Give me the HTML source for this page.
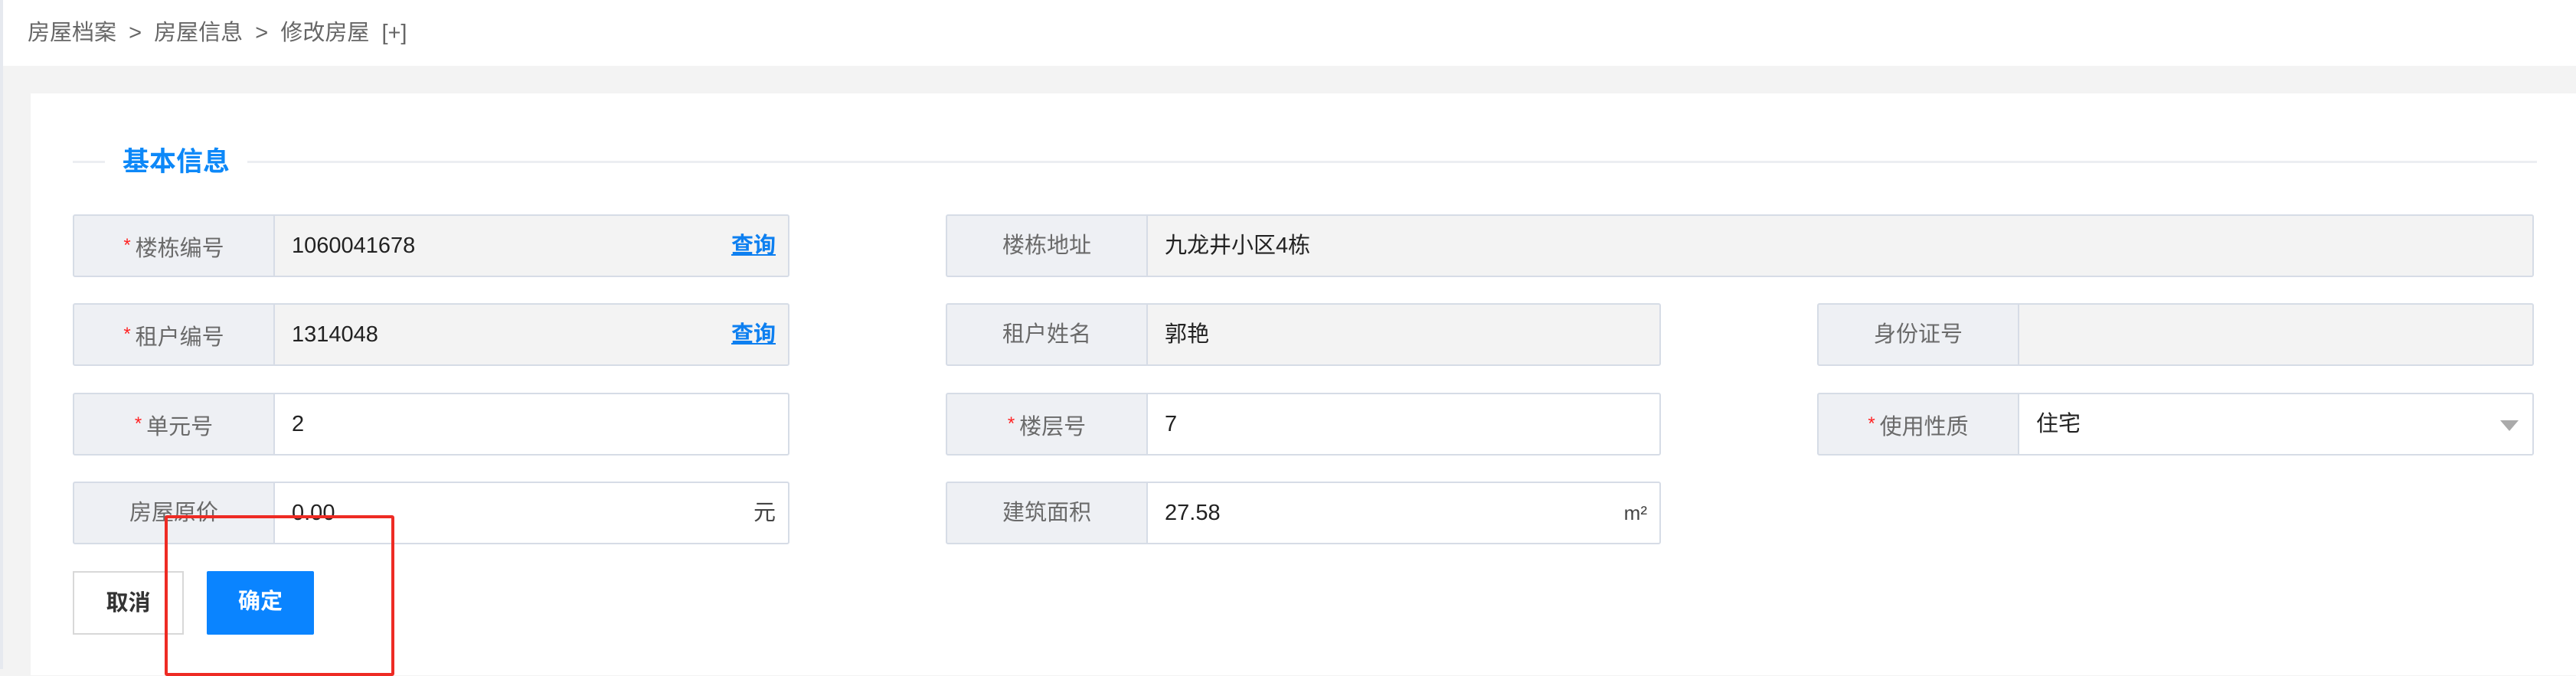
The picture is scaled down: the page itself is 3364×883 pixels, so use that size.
<!DOCTYPE html>
<html><head><meta charset="utf-8"><style>
*{margin:0;padding:0;box-sizing:border-box}
body{width:3364px;height:874px;overflow:hidden;background:#f3f3f3;font-family:"Liberation Sans","Noto Sans CJK SC",sans-serif;position:relative}
.hdr{position:absolute;left:0;top:0;width:3364px;height:86px;background:#fff}
.strip{position:absolute;left:0;top:0;width:4px;height:874px;background:#e6e9ef}
.bc{position:absolute;left:36px;top:24px;font-size:29px;color:#666;white-space:pre;line-height:38px}
.card{position:absolute;left:40px;top:122px;width:3324px;height:760px;background:#fff}
.line{position:absolute;height:3px;background:#eceef2;top:210px}
.title{position:absolute;left:160px;top:191px;font-size:35px;font-weight:bold;color:#0d88f8;line-height:42px}
.row{position:absolute;height:82px}
.lab{position:absolute;left:0;top:0;height:82px;width:264px;background:#eef0f4;border:2px solid #d6dce6;border-radius:3px 0 0 3px;color:#6a6a6a;font-size:29px;text-align:center;line-height:78px}
.lab i{color:#f22;font-style:normal;font-size:24px;vertical-align:6px;margin-right:6px}
.inp{position:absolute;left:262px;top:0;height:82px;border:2px solid #d6dce6;border-radius:0 3px 3px 0;background:#fff;font-size:29px;color:#222;line-height:78px;padding-left:22px}
.ro{background:#f3f3f3}
.q{position:absolute;right:16px;top:0;color:#0d7ff0;font-weight:bold;text-decoration:underline}
.suf{position:absolute;right:16px;top:0;color:#444}
.btn{position:absolute;top:746px;height:83px;font-size:29px;font-weight:bold;text-align:center;line-height:81px}
</style></head><body>
<div class="hdr"></div>
<div class="strip"></div>
<div class="bc">房屋档案  &gt;  房屋信息  &gt;  修改房屋  [+]</div>
<div class="card"></div>
<div class="line" style="left:95px;width:42px"></div>
<div class="line" style="left:323px;width:2990px"></div>
<div class="title">基本信息</div>

<div class="row" style="left:95px;top:280px"><div class="lab"><i>*</i>楼栋编号</div><div class="inp ro" style="width:674px">1060041678<span class="q">查询</span></div></div>
<div class="row" style="left:95px;top:396px"><div class="lab"><i>*</i>租户编号</div><div class="inp ro" style="width:674px">1314048<span class="q">查询</span></div></div>
<div class="row" style="left:95px;top:513px"><div class="lab"><i>*</i>单元号</div><div class="inp" style="width:674px">2</div></div>
<div class="row" style="left:95px;top:629px"><div class="lab">房屋原价</div><div class="inp" style="width:674px">0.00<span class="suf">元</span></div></div>

<div class="row" style="left:1235px;top:280px"><div class="lab">楼栋地址</div><div class="inp ro" style="width:1812px">九龙井小区4栋</div></div>
<div class="row" style="left:1235px;top:396px"><div class="lab">租户姓名</div><div class="inp ro" style="width:672px">郭艳</div></div>
<div class="row" style="left:1235px;top:513px"><div class="lab"><i>*</i>楼层号</div><div class="inp" style="width:672px">7</div></div>
<div class="row" style="left:1235px;top:629px"><div class="lab">建筑面积</div><div class="inp" style="width:672px">27.58<span class="suf" style="font-size:26px">m²</span></div></div>

<div class="row" style="left:2373px;top:396px"><div class="lab">身份证号</div><div class="inp ro" style="width:674px"></div></div>
<div class="row" style="left:2373px;top:513px"><div class="lab"><i>*</i>使用性质</div><div class="inp" style="width:674px">住宅<span style="position:absolute;right:18px;top:34px;width:0;height:0;border-left:12px solid transparent;border-right:12px solid transparent;border-top:14px solid #aaa"></span></div></div>

<div class="btn" style="left:95px;width:145px;border:2px solid #d8d8d8;background:#fff;color:#333">取消</div>
<div class="btn" style="left:270px;width:140px;background:#0a84ff;color:#fff;border-radius:2px">确定</div>
<div style="position:absolute;left:215px;top:673px;width:300px;height:210px;border:4px solid #ee2b24;border-radius:3px"></div>
</body></html>
